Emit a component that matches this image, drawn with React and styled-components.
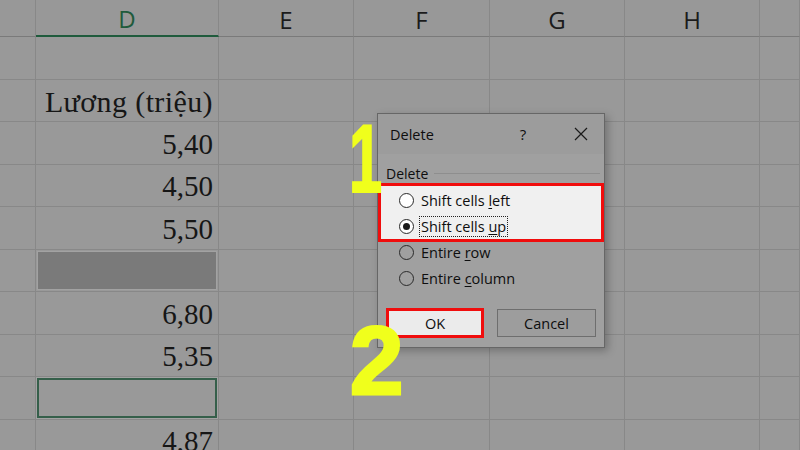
import React from 'react'
import styled, { createGlobalStyle } from 'styled-components'

const Global = createGlobalStyle`
  html, body {
    margin: 0;
    padding: 0;
    background: #999999;
  }
  body {
    width: 800px;
    height: 450px;
    overflow: hidden;
  }
`

const Page = styled.div`
  position: relative;
  width: 800px;
  height: 450px;
  overflow: hidden;
  background: #999999;
`

const Sheet = styled.div`
  display: grid;
  grid-template-columns: 36px 183px 135px 136px 135px 135px 40px;
  grid-template-rows: 37px repeat(10, 42.5px);
`

const Head = styled.div`
  box-sizing: border-box;
  display: flex;
  align-items: center;
  justify-content: center;
  border-right: 1px solid #888;
  border-bottom: ${p => (p.$active ? '2px solid #1f5b3c' : '1px solid #7a7a7a')};
  font-family: 'Open Sans', 'Noto Sans', sans-serif;
  font-size: 24px;
  color: ${p => (p.$active ? '#1f5b3c' : '#1b1b1b')};
  background: #989898;
  padding-top: 2px;
`

const Cell = styled.div`
  box-sizing: border-box;
  display: flex;
  align-items: flex-end;
  justify-content: flex-end;
  border-right: 1px solid #888;
  border-bottom: 1px solid #888;
  padding: 0 5px 5px 0;
  font-family: 'Liberation Serif', 'Times New Roman', serif;
  font-size: ${p => (p.$wide ? 30 : 29)}px;
  letter-spacing: ${p => (p.$wide ? 0.4 : 0)}px;
  line-height: 29px;
  color: #161616;
  white-space: nowrap;
`

const SelectedCell = styled(Cell)`
  padding: 1px;
  align-items: stretch;
  justify-content: stretch;
`

const SelectedFill = styled.div`
  flex: 1;
  background: #7a7a7a;
  border: 1px solid #a2a2a2;
`

const ActiveFill = styled.div`
  flex: 1;
  border: 2px solid #355f4a;
  box-shadow: 0 0 0 1px #a2a2a2;
`

const Dialog = styled.div`
  position: absolute;
  left: 377px;
  top: 113px;
  width: 228px;
  height: 235px;
  box-sizing: border-box;
  border: 1px solid #666;
  background: #a0a0a0;
  box-shadow: 3px 3px 8px rgba(0, 0, 0, 0.25);
  font-family: 'Open Sans', 'Noto Sans', sans-serif;
  color: #0e0e0e;
`

const TitleBar = styled.div`
  height: 40px;
  display: flex;
  align-items: center;
  padding: 0 0 0 12px;
  background: #9c9c9c;
  font-size: 14.5px;
`

const Title = styled.div`
  flex: 1;
`

const TitleButton = styled.div`
  width: 46px;
  display: flex;
  justify-content: center;
  align-items: center;
  font-size: 15px;
  margin-right: ${p => p.$gap || 0}px;
`

const GroupLabel = styled.div`
  display: flex;
  align-items: center;
  gap: 6px;
  margin: 10px 4px 0 8px;
  height: 18px;
  font-size: 14px;

  &::after {
    content: '';
    flex: 1;
    height: 1px;
    background: #8e8e8e;
    margin-top: 1px;
  }
`

const Highlight = styled.div`
  box-sizing: border-box;
  margin-top: 1px;
  border: 3px solid #f00d0d;
  background: #f0f0f0;
  padding: 2px 0 0;
  height: 59px;
`

const Option = styled.div`
  height: 25.5px;
  display: flex;
  align-items: center;
  gap: 5px;
  padding-left: ${p => (p.$inBox ? 18 : 21)}px;
  font-size: 14.5px;
  margin-top: ${p => (p.$pull ? -2 : 0)}px;
`

const Radio = styled.span`
  box-sizing: border-box;
  width: 15px;
  height: 15px;
  border-radius: 50%;
  border: 1px solid #2a2a2a;
  background: ${p => (p.$light ? '#ffffff' : 'transparent')};
  display: flex;
  align-items: center;
  justify-content: center;

  &::after {
    content: '';
    width: 7px;
    height: 7px;
    border-radius: 50%;
    background: ${p => (p.$checked ? '#1a1a1a' : 'transparent')};
  }
`

const Label = styled.span`
  padding: 0 1px;
  border: 1px dotted ${p => (p.$focus ? '#222' : 'transparent')};
  line-height: 19px;
`

const Key = styled.span`
  text-decoration: underline;
  text-underline-offset: 2px;
`

const Buttons = styled.div`
  display: flex;
  align-items: center;
  gap: 13px;
  padding: 17px 0 0 8px;
`

const Button = styled.div`
  box-sizing: border-box;
  width: ${p => (p.$primary ? 98 : 99)}px;
  height: ${p => (p.$primary ? 30 : 28)}px;
  display: flex;
  align-items: center;
  justify-content: center;
  font-size: 14.5px;
  border: ${p => (p.$primary ? '3px solid #f00d0d' : '1px solid #6e6e6e')};
  background: ${p => (p.$primary ? '#ebebeb' : '#9d9d9d')};
`

const Mark = styled.div`
  position: absolute;
  left: ${p => p.$x}px;
  top: ${p => p.$y}px;
  font-family: 'Liberation Sans', Arial, sans-serif;
  font-weight: 700;
  font-size: 96px;
  line-height: 1;
  color: #f0ff1c;
  -webkit-text-stroke: ${p => p.$stroke}px #f0ff1c;
  transform: scaleX(${p => p.$squeeze || 1});
  transform-origin: left top;
`

const columns = ['', 'D', 'E', 'F', 'G', 'H', '']
const values = ['', 'Lương (triệu)', '5,40', '4,50', '5,50', 'sel', '6,80', '5,35', 'active', '4,87']

function CloseIcon() {
  return (
    <svg width="14" height="14" viewBox="0 0 14 14">
      <path d="M1 1L13 13M13 1L1 13" stroke="#1a1a1a" strokeWidth="1.2" fill="none" />
    </svg>
  )
}

export default function App() {
  return (
    <Page>
      <Global />
      <Sheet>
        {columns.map((c, i) => (
          <Head key={'h' + i} $active={c === 'D'}>{c}</Head>
        ))}
        {values.map((v, r) =>
          columns.map((c, i) => {
            if (c !== 'D') return <Cell key={r + '-' + i} />
            if (v === 'sel')
              return (
                <SelectedCell key={r + '-' + i}>
                  <SelectedFill />
                </SelectedCell>
              )
            if (v === 'active')
              return (
                <SelectedCell key={r + '-' + i}>
                  <ActiveFill />
                </SelectedCell>
              )
            return (
              <Cell key={r + '-' + i} $wide={r === 1}>
                {v}
              </Cell>
            )
          })
        )}
      </Sheet>

      <Dialog>
        <TitleBar>
          <Title>Delete</Title>
          <TitleButton $gap={12}>?</TitleButton>
          <TitleButton>
            <CloseIcon />
          </TitleButton>
        </TitleBar>
        <GroupLabel>Delete</GroupLabel>
        <Highlight>
          <Option $inBox>
            <Radio $light />
            <Label>Shift cells <Key>l</Key>eft</Label>
          </Option>
          <Option $inBox>
            <Radio $light $checked />
            <Label $focus>Shift cells <Key>u</Key>p</Label>
          </Option>
        </Highlight>
        <Option $pull>
          <Radio />
          <Label>Entire <Key>r</Key>ow</Label>
        </Option>
        <Option>
          <Radio />
          <Label>Entire <Key>c</Key>olumn</Label>
        </Option>
        <Buttons>
          <Button $primary>OK</Button>
          <Button>Cancel</Button>
        </Buttons>
      </Dialog>

      <Mark $x={349} $y={111} $stroke={2} $squeeze={0.62}>1</Mark>
      <Mark $x={350} $y={313} $stroke={3}>2</Mark>
    </Page>
  )
}
